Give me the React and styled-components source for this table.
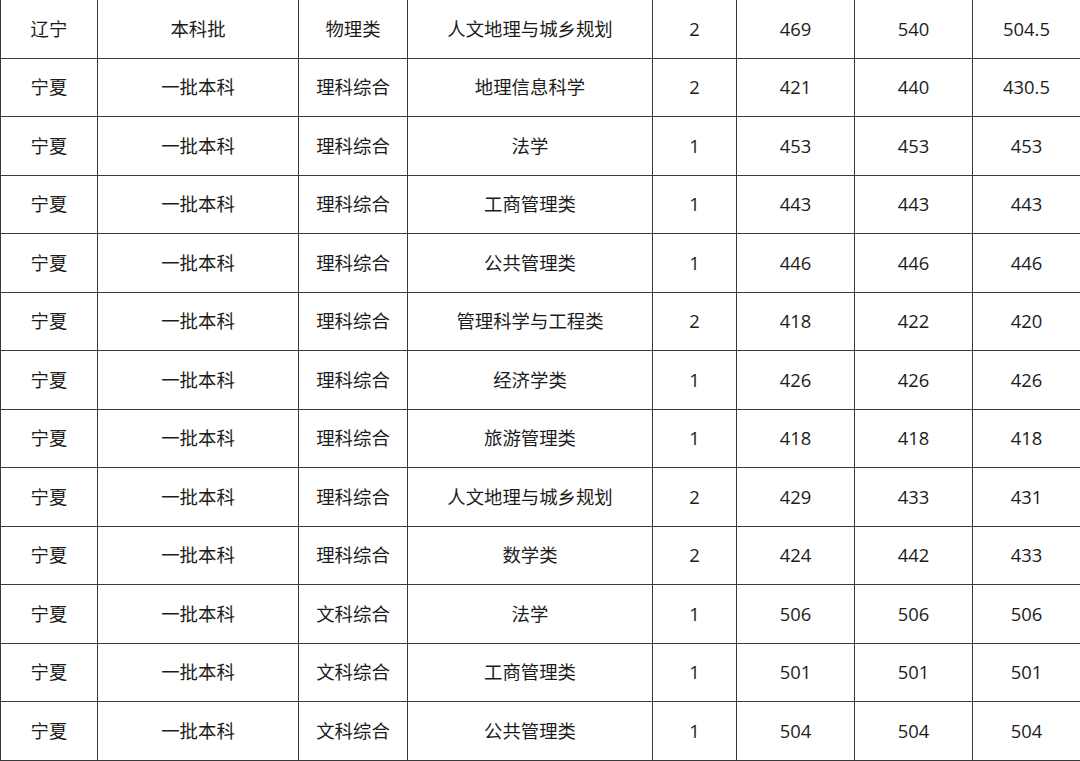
import styled, { createGlobalStyle } from "styled-components";

const GlobalStyle = createGlobalStyle`
  html, body {
    margin: 0;
    padding: 0;
    background: #ffffff;
    overflow: hidden;
  }
`;

const Page = styled.div`
  width: 1080px;
  height: 761px;
  overflow: hidden;
  background: #ffffff;
`;

const Table = styled.table`
  border-collapse: collapse;
  table-layout: fixed;
  width: 1080px;
  margin-top: -1px;
  font-family: "Open Sans", "Noto Sans CJK SC", sans-serif;
  font-size: 18.4px;
  color: #1c1c1c;
`;

const Cell = styled.td`
  border: 1px solid #3a3a3a;
  height: 57.5px;
  padding: 0;
  text-align: center;
  vertical-align: middle;
  line-height: 1;
`;

const widths = [97, 201, 109, 245, 84, 118, 118, 108];

const rows = [
  ["辽宁", "本科批", "物理类", "人文地理与城乡规划", "2", "469", "540", "504.5"],
  ["宁夏", "一批本科", "理科综合", "地理信息科学", "2", "421", "440", "430.5"],
  ["宁夏", "一批本科", "理科综合", "法学", "1", "453", "453", "453"],
  ["宁夏", "一批本科", "理科综合", "工商管理类", "1", "443", "443", "443"],
  ["宁夏", "一批本科", "理科综合", "公共管理类", "1", "446", "446", "446"],
  ["宁夏", "一批本科", "理科综合", "管理科学与工程类", "2", "418", "422", "420"],
  ["宁夏", "一批本科", "理科综合", "经济学类", "1", "426", "426", "426"],
  ["宁夏", "一批本科", "理科综合", "旅游管理类", "1", "418", "418", "418"],
  ["宁夏", "一批本科", "理科综合", "人文地理与城乡规划", "2", "429", "433", "431"],
  ["宁夏", "一批本科", "理科综合", "数学类", "2", "424", "442", "433"],
  ["宁夏", "一批本科", "文科综合", "法学", "1", "506", "506", "506"],
  ["宁夏", "一批本科", "文科综合", "工商管理类", "1", "501", "501", "501"],
  ["宁夏", "一批本科", "文科综合", "公共管理类", "1", "504", "504", "504"],
];

export default function App() {
  return (
    <Page>
      <GlobalStyle />
      <Table>
        <colgroup>
          {widths.map((w, i) => (
            <col key={i} style={{ width: w }} />
          ))}
        </colgroup>
        <tbody>
          {rows.map((row, r) => (
            <tr key={r}>
              {row.map((cell, c) => (
                <Cell key={c}>{cell}</Cell>
              ))}
            </tr>
          ))}
        </tbody>
      </Table>
    </Page>
  );
}
